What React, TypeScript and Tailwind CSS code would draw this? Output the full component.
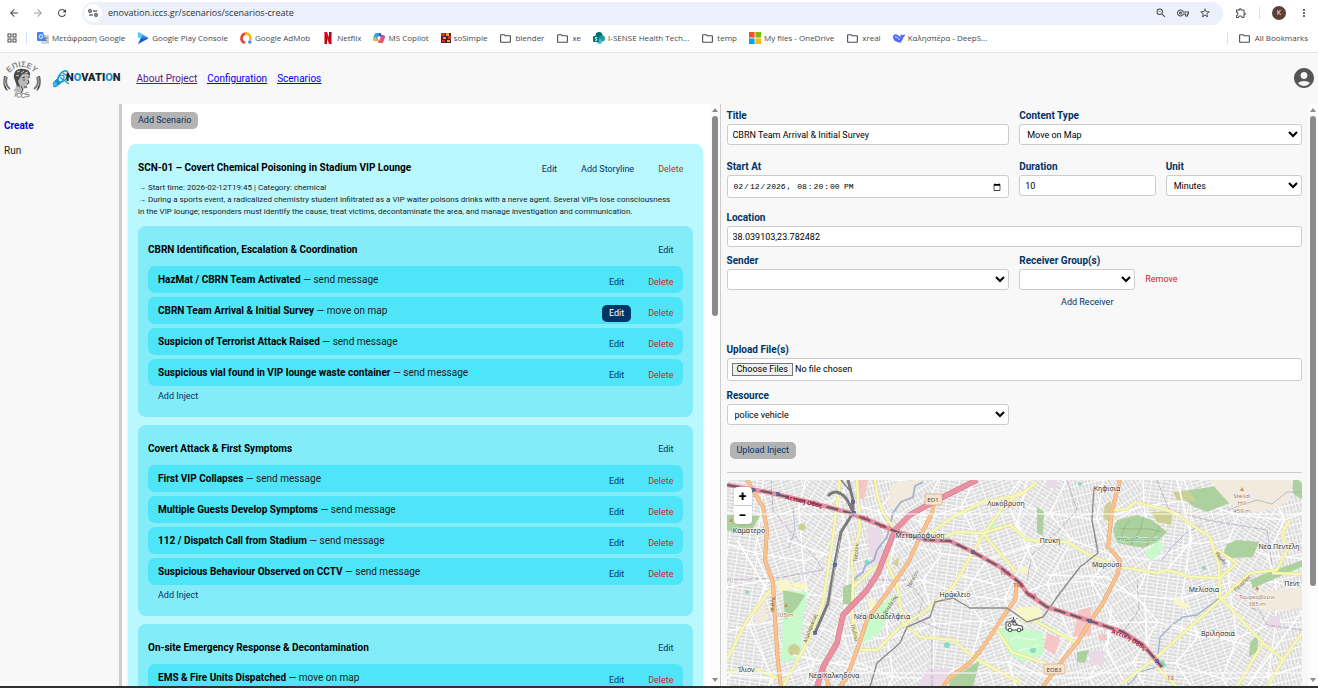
import React, { useState } from 'react';
import {
  MdArrowBack,
  MdArrowForward,
  MdRefresh,
  MdOutlineZoomOut,
  MdStarBorder,
  MdOutlineExtension,
  MdMoreVert,
  MdOutlineFolder,
  MdAccountCircle,
  MdOutlineVpnKey,
  MdOutlineGridView,
} from 'react-icons/md';

interface Inject {
  title: string;
  type: string;
}

interface Storyline {
  title: string;
  injects: Inject[];
}

const storylines: Storyline[] = [
  {
    title: 'CBRN Identification, Escalation & Coordination',
    injects: [
      { title: 'HazMat / CBRN Team Activated', type: 'send message' },
      { title: 'CBRN Team Arrival & Initial Survey', type: 'move on map' },
      { title: 'Suspicion of Terrorist Attack Raised', type: 'send message' },
      { title: 'Suspicious vial found in VIP lounge waste container', type: 'send message' },
    ],
  },
  {
    title: 'Covert Attack & First Symptoms',
    injects: [
      { title: 'First VIP Collapses', type: 'send message' },
      { title: 'Multiple Guests Develop Symptoms', type: 'send message' },
      { title: '112 / Dispatch Call from Stadium', type: 'send message' },
      { title: 'Suspicious Behaviour Observed on CCTV', type: 'send message' },
    ],
  },
  {
    title: 'On-site Emergency Response & Decontamination',
    injects: [{ title: 'EMS & Fire Units Dispatched', type: 'move on map' }],
  },
];

/* ---------- browser chrome ---------- */

const folder = <MdOutlineFolder className="size-[13px]" />;

const bookmarks: { label: string; icon: React.ReactNode }[] = [
  {
    label: 'Μετάφραση Google',
    icon: (
      <svg viewBox="0 0 12 12" className="size-3">
        <rect x="4" y="3" width="8" height="9" rx="1" fill="#cfd3d8" />
        <path d="M1 0h5l3 9H1a1 1 0 0 1-1-1V1a1 1 0 0 1 1-1z" fill="#4285f4" />
        <circle cx="4" cy="4.500" r="1.800" fill="none" stroke="#fff" />
        <path d="M7.500 6h3.500M9 5v1c0 1.500-1 2.500-1.500 3M8.500 7.500l2 2" stroke="#6b7280" strokeWidth=".7" fill="none" />
      </svg>
    ),
  },
  {
    label: 'Google Play Console',
    icon: (
      <svg viewBox="0 0 12 12" className="size-3">
        <path d="M1 0l10 5.500v1L1 12l3-6z" fill="#4285f4" />
        <path d="M1 6h10v.5L1 12l3-6z" fill="#1a5fd0" />
        <path d="M1 0l5 3-3 3H1z" fill="#5bc9f4" />
      </svg>
    ),
  },
  {
    label: 'Google AdMob',
    icon: (
      <svg viewBox="0 0 12 12" className="size-3">
        <path d="M4 10.500A4.800 4.800 0 0 1 6 1.500" stroke="#ea4335" strokeWidth="2.600" fill="none" strokeLinecap="round" />
        <path d="M6 1.500A4.500 4.500 0 0 1 10.300 7" stroke="#fbbc04" strokeWidth="2.600" fill="none" strokeLinecap="round" />
        <circle cx="9.800" cy="10" r="1.700" fill="#4285f4" />
      </svg>
    ),
  },
  {
    label: 'Netflix',
    icon: (
      <svg viewBox="0 0 12 12" className="size-3">
        <path d="M2.500 0h2.500v12H2.500zM7 0h2.500v12H7z" fill="#b1060f" />
        <path d="M2.500 0h2.500l4.500 12H7z" fill="#e50914" />
      </svg>
    ),
  },
  {
    label: 'MS Copilot',
    icon: (
      <svg viewBox="0 0 12 12" className="size-3">
        <path d="M3 1h4l-2.500 8H2a2 2 0 0 1-2-2.500L1.500 2.500A2 2 0 0 1 3 1z" fill="#2fa4e7" />
        <path d="M0 6l3-1 1.500 4H2a2 2 0 0 1-2-2.500z" fill="#f2b233" />
        <path d="M9 11H5l2.500-8H10a2 2 0 0 1 2 2.500l-1.500 4A2 2 0 0 1 9 11z" fill="#d64ea8" />
        <path d="M5 11l1-4 4 2.500A2 2 0 0 1 9 11z" fill="#f0663f" />
        <path d="M6 1h1.500L9 4H6z" fill="#2457c5" />
        <circle cx="6" cy="6" r="1.600" fill="#fff" />
      </svg>
    ),
  },
  {
    label: 'soSimple',
    icon: (
      <svg viewBox="0 0 10 10" className="size-2.5">
        <path d="M0 0h10v10H0z" fill="#3b2340" />
        <path d="M0 0h4v3H0zM7 3h3v3H7zM1 7h3v2H1z" fill="#e02b20" />
        <path d="M5 0h3v3H5zM2 4h3v2H2zM6 7h3v2H6z" fill="#f5a623" />
      </svg>
    ),
  },
  { label: 'blender', icon: folder },
  { label: 'xe', icon: folder },
  {
    label: 'I-SENSE Health Tech...',
    icon: (
      <svg viewBox="0 0 12 12" className="size-3">
        <circle cx="6" cy="3.500" r="3.500" fill="#036c70" />
        <circle cx="9" cy="6.500" r="3" fill="#1a9ba1" />
        <circle cx="6.500" cy="9.500" r="2.500" fill="#37c6d0" />
        <rect x="0" y="4" width="6" height="6" rx=".6" fill="#03787c" />
        <path d="M4.200 5.500H2.500v1.400h1.200v1.500H2" stroke="#fff" strokeWidth=".8" fill="none" />
      </svg>
    ),
  },
  { label: 'temp', icon: folder },
  {
    label: 'My files - OneDrive',
    icon: (
      <svg viewBox="0 0 12 12" className="size-3">
        <path d="M0 0h5.600v5.600H0z" fill="#f25022" />
        <path d="M6.400 0H12v5.600H6.400z" fill="#7fba00" />
        <path d="M0 6.400h5.600V12H0z" fill="#00a4ef" />
        <path d="M6.400 6.400H12V12H6.400z" fill="#ffb900" />
      </svg>
    ),
  },
  { label: 'xreal', icon: folder },
  {
    label: 'Καλησπέρα - DeepS...',
    icon: (
      <svg viewBox="0 0 12 12" className="size-3">
        <path
          d="M0 5c0-2 1.500-3 3.500-2.600C5.500 2.800 6 4.500 8 4.800 7.300 3.500 7.600 2.500 8.300 2c.2.900.7 1.200 1.500 1.100C10.500 3 11.200 2.500 12 2.400c-.1 1.600-.9 2.700-2 3 0 2-1 3.500-2.200 4.200l1.100.6c-1.600.6-3.100.4-4.500-.2C1.800 9.400 0 7.500 0 5z"
          fill="#4d6bfe"
        />
        <path d="M2 5c1.500-.3 3.800 1 4.300 3" stroke="#fff" strokeWidth=".9" fill="none" />
      </svg>
    ),
  },
];

const BrowserBar: React.FC = () => (
  <div className="shrink-0 border-b border-[#e4e6ea] bg-white font-['Open_Sans','Noto_Sans',sans-serif] text-[#45484c]">
    <div className="flex h-[26px] items-center pr-2">
      <div className="flex w-[82px] shrink-0 items-center gap-3 pl-2">
        <button aria-label="Back"><MdArrowBack className="size-3" /></button>
        <button aria-label="Forward" className="text-gray-400"><MdArrowForward className="size-3" /></button>
        <button aria-label="Reload"><MdRefresh className="size-3" /></button>
      </div>
      <div className="flex h-[23px] flex-1 items-center gap-1.5 rounded-full bg-[#ebf0fa] pr-3 pl-0.5">
        <span className="flex size-[18px] items-center justify-center rounded-full bg-white">
          <svg viewBox="0 0 10 8" className="h-2 w-2.5" fill="none" stroke="#45484c" strokeWidth="1.200">
            <circle cx="2" cy="2" r="1.300" />
            <path d="M5 2h4" />
            <circle cx="8" cy="6" r="1.300" />
            <path d="M1 6h4" />
          </svg>
        </span>
        <input
          aria-label="Address"
          className="min-w-0 flex-1 bg-transparent text-[9px] text-[#303338] outline-none"
          defaultValue="enovation.iccs.gr/scenarios/scenarios-create"
        />
        <div className="flex items-center gap-2.5">
          <button aria-label="Zoom"><MdOutlineZoomOut className="size-3" /></button>
          <button aria-label="Passwords"><MdOutlineVpnKey className="size-3" /></button>
          <button aria-label="Bookmark this tab"><MdStarBorder className="size-3" /></button>
        </div>
      </div>
      <div className="flex shrink-0 items-center gap-3 pl-3">
        <button aria-label="Extensions"><MdOutlineExtension className="size-3" /></button>
        <span className="h-3 w-px bg-[#cfe0fb]" />
        <span className="flex size-3.5 items-center justify-center rounded-full bg-[#5d4037] text-[7px] text-white">K</span>
        <button aria-label="Menu"><MdMoreVert className="size-3" /></button>
      </div>
    </div>
    <div className="flex h-[26px] items-center pr-2.5 pl-1.5 pb-0.5 text-[8px] whitespace-nowrap">
      <button aria-label="Apps"><MdOutlineGridView className="size-3" /></button>
      <span className="mr-2.5 ml-2 h-3 w-px bg-[#cfe0fb]" />
      <div className="flex items-center gap-3">
        {bookmarks.map((b) => (
          <a key={b.label} href="#" className="flex items-center gap-[3px]">
            {b.icon}
            {b.label}
          </a>
        ))}
      </div>
      <span className="ml-auto h-3 w-px bg-[#cfe0fb]" />
      <button className="ml-2.5 flex items-center gap-1">
        {folder}
        All Bookmarks
      </button>
    </div>
  </div>
);

/* ---------- app header ---------- */

const IccsLogo: React.FC = () => (
  <svg viewBox="0 0 40 40" className="size-10" role="img" aria-label="ICCS">
    <defs>
      <path id="arcTop" d="M5 19.500A15.500 15.500 0 0 1 35 19.500" />
      <path id="arcBottom" d="M4 31A20 20 0 0 0 36 31" />
      <linearGradient id="ring" x1="0" x2="1">
        <stop offset="0" stopColor="#aaa" />
        <stop offset=".5" stopColor="#333" />
        <stop offset="1" stopColor="#999" />
      </linearGradient>
    </defs>
    <text fontSize="8" fontWeight="700" fill="#858585" fontFamily="Liberation Sans, sans-serif" textAnchor="middle">
      <textPath href="#arcTop" startOffset="50%">ΕΠΙΣΕΥ</textPath>
    </text>
    <text fontSize="7" fontWeight="700" fill="#858585" fontFamily="Liberation Sans, sans-serif" textAnchor="middle">
      <textPath href="#arcBottom" startOffset="50%">ICCS</textPath>
    </text>
    <path d="M2 17c-2 6-1 11 3 15l1-1C2 26 2 21 4 17z" fill="url(#ring)" />
    <path d="M38 17c2 6 1 11-3 15l-1-1c4-5 4-10 2-14z" fill="url(#ring)" />
    <path d="M5 18c-2 4-1 9 3 12" stroke="#777" strokeWidth="2" fill="none" />
    <path d="M35 18c2 4 1 9-3 12" stroke="#777" strokeWidth="2" fill="none" />
    <g transform="translate(0 1)">
      <path d="M13 17c-1-5 3-9 8-8 5 0 8 3 7 7l-1 3-1 2 1 3-2 1v3l-4 1-1 4-9-2c3-3 4-5 3-8z" fill="#b9b9b9" />
      <path d="M12 18c-1-6 3-10 9-9 5 0 8 3 7 7-2-3-4-3-7-2-2 1-3 4-5 7l2 6-3-1z" fill="#4a4a4a" />
      <path d="M15 12l3-1m1 2l3-2m1 2l3-1M14 16l3-1" stroke="#c4c4c4" strokeWidth="1" />
      <path d="M20 18l3-1m3 0l2 0M21 20h2m3 0l1 3-2 1m-3 3h3m-6-1l2 4-2 3" stroke="#444" strokeWidth="1" fill="none" />
    </g>
  </svg>
);

const EnovationLogo: React.FC = () => (
  <div className="flex items-center" role="img" aria-label="eNOVATION">
    <svg viewBox="0 0 18 20" className="-mr-1 h-5 w-[18px]" fill="none" stroke="#1597d4">
      <path d="M1 14l4-4 4 4-4 3-3 1z" fill="#1597d4" />
      <ellipse cx="11" cy="7.500" rx="3.800" ry="6.500" transform="rotate(38 11 7.500)" strokeWidth="1.500" />
      <ellipse cx="8.500" cy="10" rx="2.600" ry="4.500" transform="rotate(38 8.500 10)" strokeWidth="1.200" />
      <path d="M8 8l3 3M11 4l4 3M13 12l4 3" strokeWidth="1.200" />
      <circle cx="3" cy="15" r="2" fill="#4db6e4" stroke="none" />
    </svg>
    <span className="text-[11px] font-black text-[#1c2430]">
      N<span className="text-[#1597d4]">O</span>VATI<span className="text-[#1597d4]">O</span>N
    </span>
  </div>
);

const Header: React.FC = () => (
  <header className="flex h-[51px] shrink-0 items-center bg-[#f8f8f8] px-0.5">
    <IccsLogo />
    <div className="ml-2.5">
      <EnovationLogo />
    </div>
    <nav className="ml-4 flex gap-2.5 text-[10px] text-[#0000ee] underline">
      <a href="#" className="text-[#551a8b]">About Project</a>
      <a href="#">Configuration</a>
      <a href="#">Scenarios</a>
    </nav>
    <button aria-label="Account" className="ml-auto pb-0.5 text-[#555]">
      <MdAccountCircle className="size-6" />
    </button>
  </header>
);

/* ---------- shared bits ---------- */

const Scrollbar: React.FC<{ thumb: string }> = ({ thumb }) => (
  <div className="flex w-2.5 shrink-0 flex-col items-center justify-between bg-[#fcfcfc] py-1" aria-hidden="true">
    <svg viewBox="0 0 6 4" className="h-1 w-1.5 shrink-0" fill="#8b8b8b"><path d="M3 0l3 4H0z" /></svg>
    <div className="mt-1 min-h-0 w-full flex-1 px-0.5">
      <div className={`w-full rounded-full bg-[#8b8b8b] ${thumb}`} />
    </div>
    <svg viewBox="0 0 6 4" className="h-1 w-1.5 shrink-0" fill="#8b8b8b"><path d="M3 4l3-4H0z" /></svg>
  </div>
);

const TextButton: React.FC<{ label: string; tone?: 'navy' | 'red' | 'active' | 'gray'; onClick?: () => void }> = ({
  label,
  tone = 'navy',
  onClick,
}) => {
  const tones = {
    navy: 'text-[#003366]',
    red: 'text-[#cc1f1f]',
    active: 'bg-[#003366] text-white',
    gray: 'bg-[#b3b3b3] text-[#003366]',
  };
  return (
    <button onClick={onClick} className={`h-[17px] rounded-[5px] px-[7px] text-[9px] leading-none ${tones[tone]}`}>
      {label}
    </button>
  );
};

/* ---------- scenario list ---------- */

const ScenarioList: React.FC = () => {
  const [selected, setSelected] = useState('CBRN Team Arrival & Initial Survey');

  return (
    <div className="min-w-0 flex-1 overflow-hidden bg-white pt-2 pr-[7px] pl-1.5">
      <div className="flex pl-[3px]">
        <TextButton label="Add Scenario" tone="gray" />
      </div>
      <section className="mt-[15px] rounded-lg bg-[#baf8ff] p-2.5 shadow-md">
        <div className="flex h-[26px] items-center justify-between">
          <h2 className="text-[10px] font-bold text-black">SCN-01 – Covert Chemical Poisoning in Stadium VIP Lounge</h2>
          <div className="flex gap-2.5 self-end pr-0.5 pb-0.5">
            <TextButton label="Edit" />
            <TextButton label="Add Storyline" />
            <TextButton label="Delete" tone="red" />
          </div>
        </div>
        <div className="mt-0.5 mb-2 pr-[18px] text-[8px] leading-3 text-[#1a1a1a]">
          <p>→ Start time: 2026-02-12T19:45 | Category: chemical</p>
          <p>
            → During a sports event, a radicalized chemistry student infiltrated as a VIP waiter poisons drinks with a nerve
            agent. Several VIPs lose consciousness in the VIP lounge; responders must identify the cause, treat victims,
            decontaminate the area, and manage investigation and communication.
          </p>
        </div>
        <div className="flex flex-col gap-2">
          {storylines.map((story) => (
            <article key={story.title} className="rounded-lg bg-[#84ecf8] px-2.5 pt-2.5 pb-3">
              <div className="mb-1 flex h-[26px] items-center justify-between">
                <h3 className="text-[10px] font-bold text-black">{story.title}</h3>
                <div className="self-end pr-0.5 pb-0.5">
                  <TextButton label="Edit" />
                </div>
              </div>
              <ul className="flex flex-col gap-1">
                {story.injects.map((inject) => (
                  <li
                    key={inject.title}
                    className="flex h-[27px] items-center justify-between rounded-[7px] bg-[#4fe5f8] pl-2.5 text-[10px] text-[#1a1a1a]"
                  >
                    <span>
                      <b className="font-bold text-black">{inject.title}</b> — {inject.type}
                    </span>
                    <div className="flex gap-2.5 self-end pr-0.5 pb-0.5">
                      <TextButton
                        label="Edit"
                        tone={inject.title === selected ? 'active' : 'navy'}
                        onClick={() => setSelected(inject.title)}
                      />
                      <TextButton label="Delete" tone="red" />
                    </div>
                  </li>
                ))}
              </ul>
              <div className="mt-0.5 flex pl-[3px]">
                <TextButton label="Add Inject" />
              </div>
            </article>
          ))}
        </div>
      </section>
    </div>
  );
};

/* ---------- map ---------- */

// Street blocks: a jittered lattice whose cells each take one of the rotated street patterns
const COLS = 14;
const ROWS = 6;
const vertex = (i: number, j: number) => {
  const dx = Math.sin(i * 12.9 + j * 78.2) * 13;
  const dy = Math.cos(i * 39.3 + j * 11.1) * 11;
  return `${Math.round((i * 600) / COLS - 10 + dx)},${Math.round((j * 240) / ROWS - 10 + dy)}`;
};
const blocks = Array.from({ length: COLS * ROWS }, (_, n) => {
  const i = n % COLS;
  const j = Math.floor(n / COLS);
  return {
    points: [vertex(i, j), vertex(i + 1, j), vertex(i + 1, j + 1), vertex(i, j + 1)].join(' '),
    fill: `url(#streets${(i * 3 + j * 5) % 5})`,
  };
});

const angles = [8, 32, 58, -18, 76];

const motorway = 'M0 5L40 12 86 23 123 33 146 42 170 52 200 60 223 61 246 72 273 87 293 103 300 113 320 127 363 141 396 152 416 165 435 187';

const yellowRoads = [
  'M46 107L20 140 0 180',
  'M113 0L106 57 96 123 83 157 56 207',
  'M130 0L133 50 125 77 126 107 125 133 130 160',
  'M148 0L150 15 156 33 166 47',
  'M126 107L145 90 163 77',
  'M160 83L170 105 176 143 193 157 226 160 246 177 293 203',
  'M173 147L200 130 226 107 253 60 275 28 293 12',
  'M193 60L226 37 256 22 293 15 310 2',
  'M256 53L270 70 290 93',
  'M203 62L230 52 256 53 283 45 300 60 340 62 366 77 393 87 430 93 440 90 463 97 493 98 510 83 490 70',
  'M386 30L400 29 408 22 446 32 483 57 492 85 493 117 536 163 556 180',
  'M493 120L430 177 396 203',
  'M493 120L523 93 550 90 560 70 555 53 563 40',
  'M536 163L510 207',
  'M575 153L556 180 540 207',
  'M430 187L450 207',
  'M306 140L350 163',
  'M545 93L575 94',
  'M0 192L30 190 56 200',
  'M173 147L150 170 133 170',
  'M270 150L285 172 316 183',
];

const orangeRoads = [
  'M20 0L36 27 40 50 38 80 46 103 48 140 51 183 54 207',
  'M208 20L205 33 193 57 181 83 160 113 140 140 131 167 120 197 113 207',
  'M393 0L385 30 381 67 393 80 391 93 376 123 363 142 350 163 333 183 316 207',
  'M290 103L288 120 276 137 256 167 243 183 223 197 216 207',
  'M96 187L102 207',
];

const places: { name: string; x: number; y: number }[] = [
  { name: 'Καματερό', x: 22, y: 53 },
  { name: 'Λυκόβρυση', x: 279, y: 26 },
  { name: 'Μεταμόρφωση', x: 193, y: 58 },
  { name: 'Ηράκλειο', x: 228, y: 117 },
  { name: 'Νέα Φιλαδέλφεια', x: 155, y: 139 },
  { name: 'Νέα Χαλκηδόνα', x: 107, y: 198 },
  { name: 'Ίλιον', x: 19, y: 192 },
  { name: 'Κηφισιά', x: 380, y: 11 },
  { name: 'Πεύκη', x: 323, y: 63 },
  { name: 'Μαρούσι', x: 380, y: 87 },
  { name: 'Νέα Πεντέλη', x: 552, y: 69 },
  { name: 'Μελίσσια', x: 477, y: 112 },
  { name: 'Βριλήσσια', x: 491, y: 156 },
  { name: 'Πεντ', x: 565, y: 106 },
];

const MapView: React.FC = () => (
  <div className="relative min-h-0 flex-1 overflow-hidden rounded-t-[5px] bg-[#dedddd]">
    <svg viewBox="0 0 576 206" preserveAspectRatio="xMinYMin slice" className="h-full w-full" fontFamily="Noto Sans, sans-serif">
      <defs>
        {angles.map((a, i) => (
          <pattern key={a} id={`streets${i}`} width="10" height="7" patternUnits="userSpaceOnUse" patternTransform={`rotate(${a})`}>
            <rect width="10" height="7" fill="#dcdbdb" />
            <path d="M0 .5H10M.5 0V7M6 0V3.500M0 4H10" stroke="#fff" strokeWidth=".9" />
          </pattern>
        ))}
      </defs>
      {blocks.map((b, i) => (
        <polygon key={i} points={b.points} fill={b.fill} stroke="#fff" strokeWidth="1.200" />
      ))}

      {/* land use */}
      <g fill="#c8facc">
        <path d="M56 110L80 112 76 140 73 177 55 183z" />
        <path d="M156 123L168 115 153 153 136 163 140 142z" />
        <path d="M270 150L285 143 316 153 316 175 296 182 283 175z" />
        <path d="M418 72L432 60 437 68 424 82z" />
        <path d="M262 42L269 40 269 48 262 49z" />
      </g>
      <g fill="#add19e">
        <path d="M390 40L410 35 425 40 440 52 430 62 416 68 390 63 386 50z" />
        <path d="M310 27L317 32 316 55 310 53z" />
        <path d="M496 75L500 64 510 60 532 62 526 77 505 78z" />
        <path d="M450 12L490 6 510 20 480 32 465 26z" />
        <path d="M0 34L33 36 26 48 8 53 0 50z" />
        <path d="M223 200L253 180 246 207 222 207z" />
        <path d="M56 110L78 115 70 128 58 140z" />
        <path d="M566 0H576V20L566 14z" />
        <path d="M523 100L540 93 576 80 576 86 545 100 526 108z" />
        <path d="M350 172L362 170 358 183 350 182z" />
        <path d="M116 107L125 103 124 125 116 124z" />
        <path d="M523 163L532 152 530 172 522 177z" />
      </g>
      <g fill="#f2ebdd">
        <path d="M483 0H566L563 20 550 27 525 33 505 26 490 10z" />
        <path d="M166 3L195 0 185 17 170 30 160 25z" />
        <path d="M530 112L576 108V128L536 132z" />
        <path d="M26 130L38 120 40 140 30 145z" />
      </g>
      <g fill="#f8f7c9">
        <path d="M49 101L62 100 66 110 51 111z" />
        <path d="M64 102L80 104 82 110 68 110z" />
        <path d="M288 128L312 126 316 138 295 143z" />
        <path d="M140 122L147 119 149 127 143 130z" />
        <path d="M290 90L300 85 302 96z" />
        <path d="M448 118L462 124 459 130 446 123z" />
      </g>
      <g fill="#cdcf94">
        <path d="M446 12L462 11 470 22 450 20z" />
        <path d="M424 32L446 32 444 45 430 42z" />
        <path d="M378 25L384 20 382 42 376 38z" />
        <circle cx="75" cy="47" r="3.500" />
        <path d="M165 83L172 77 171 87z" />
        <circle cx="67" cy="170" r="6" />
      </g>
      <g fill="#f5c6c4">
        <path d="M320 153L333 158 328 175 317 168z" />
        <path d="M352 130L364 127 364 155 346 157z" />
        <path d="M130 0L141 0 137 20 131 18z" />
        <path d="M371 155L378 153 380 160 372 161z" />
      </g>
      <g fill="#ead9e6">
        <path d="M141 45L155 50 155 85 146 82 140 60z" />
        <path d="M320 0L330 0 330 8 320 8z" />
        <path d="M363 172L378 170 376 186 362 184z" />
        <path d="M200 190L225 188 214 207 190 207z" />
        <path d="M540 138L553 135 553 147 542 148z" />
      </g>
      <g fill="#88dcbe">
        <circle cx="220" cy="165" r="3" />
        <circle cx="140" cy="82" r="2.500" />
        <circle cx="306" cy="170" r="3" />
        <path d="M428 184L436 180 440 186 434 188z" />
        <circle cx="20" cy="112" r="2" />
        <circle cx="353" cy="4" r="2" />
        <circle cx="477" cy="88" r="2" />
      </g>
      <path d="M392 60c6-8 3-14 12-20M404 66c3-10 10-12 12-28M420 66c0-9 10-8 12-20M392 48c12 3 28-2 42 4" stroke="#8ca775" strokeWidth=".6" fill="none" />
      <path d="M284 160c8-8 18 4 26-2M290 176c4-12 14-4 22-12" stroke="#fff" strokeWidth=".8" fill="none" />

      {/* boundaries and water */}
      <g fill="none" stroke="#bfa9c6" strokeWidth="1" strokeDasharray="4 1 1 1">
        <path d="M44 0L46 30 62 50 90 80 96 90" />
        <path d="M126 100L180 100 196 120 190 140 215 150" />
        <path d="M340 0L350 30 332 50 305 75 300 100" />
        <path d="M430 0L442 30 480 40 540 50 545 85" />
        <path d="M576 150L540 145 532 130 524 128" />
        <path d="M0 100L50 98 96 90" />
        <path d="M205 160L205 207M396 152L412 130 410 100" />
      </g>
      <g fill="none" stroke="#9fb2cf" strokeWidth="1.800" strokeLinejoin="round">
        <path d="M196 2L188 6 186 17 174 22 166 33 163 46 160 57 150 70 147 80 138 86 136 92 126 100 124 107" />
        <path d="M430 183L433 157 445 145 456 137 470 135 490 120 512 105" strokeWidth="1.400" />
        <path d="M433 82L446 66 460 52 475 45" strokeWidth=".8" />
        <path d="M500 30L530 20 545 24 560 12 576 12" strokeWidth=".8" />
        <path d="M430 187L412 192 405 202 396 207" strokeWidth="1.200" />
        <path d="M66 27L68 50 62 68" strokeWidth=".8" />
      </g>

      {/* secondary roads */}
      <g fill="none" stroke="#fff" strokeWidth="1.600">
        <path d="M320 95L380 97 418 125 420 165M233 95L270 105M66 175L140 190M300 0L290 45 310 90" />
        <path d="M445 145L520 165M450 0L465 60 440 90M10 60L40 110M60 60L100 75M520 207L576 130M400 207L380 170 384 128" />
      </g>
      <g fill="none" stroke="#d5d48e" strokeWidth="3.200" strokeLinejoin="round">
        {yellowRoads.map((d) => <path key={d} d={d} />)}
      </g>
      <g fill="none" stroke="#f6f8b4" strokeWidth="2.600" strokeLinejoin="round">
        {yellowRoads.map((d) => <path key={d} d={d} />)}
      </g>
      <g fill="none" stroke="#d9a066" strokeWidth="4" strokeLinejoin="round">
        {orangeRoads.map((d) => <path key={d} d={d} />)}
      </g>
      <g fill="none" stroke="#fbc28e" strokeWidth="3.200" strokeLinejoin="round">
        {orangeRoads.map((d) => <path key={d} d={d} />)}
      </g>

      {/* railways */}
      <g fill="none" stroke="#7b7b7b">
        <path d="M101 16C107 9 119 10 126 33M121 0L126 20V33M126 33L114 52 108 83 101 123 88 153" strokeWidth="3" />
        <path d="M110 13C119 15 120 22 126 33M114 0L124 12" strokeWidth="1.400" />
        <path d="M113 60L106 100 102 130" stroke="#c7c7c7" strokeWidth=".8" />
        <path
          d="M143 207L150 183 173 163 180 147 203 137 208 122 226 118 243 128 280 128 293 137 300 142 316 137 333 113 353 87 371 73 365 40 367 7"
          stroke="#8d8d8d"
          strokeWidth="1.400"
          strokeLinejoin="round"
        />
      </g>

      {/* motorways */}
      <path d="M250 0L206 22 183 35 168 50 160 70 151 93 140 110 116 135 110 163 96 187 90 207" fill="none" stroke="#dc6d86" strokeWidth="5.600" strokeLinejoin="round" />
      <path d="M250 0L206 22 183 35 168 50 160 70 151 93 140 110 116 135 110 163 96 187 90 207" fill="none" stroke="#e892a2" strokeWidth="4.600" strokeLinejoin="round" />
      <path d={motorway} fill="none" stroke="#e58da0" strokeWidth="4.600" strokeLinejoin="round" />
      <path d={motorway} fill="none" stroke="#6b5960" strokeWidth="2" strokeDasharray="12 5" />
      <path id="attiki" d="M58 19L86 26 110 32" fill="none" />
      <path id="attiki2" d="M384 153L400 159 420 172" fill="none" />
      <g fontSize="6" fontWeight="700" fill="#a02846">
        <text><textPath href="#attiki">Αττική Οδός</textPath></text>
        <text><textPath href="#attiki2">Αττική Οδός</textPath></text>
      </g>
      <g fontSize="6" fill="#c43a55">
        <text x="135" y="40">8Α</text>
        <text x="152" y="48">9Α</text>
        <text x="273" y="95">10Α</text>
        <text x="286" y="107">10Β</text>
        <text x="299" y="117">10Α</text>
        <text x="440" y="200">13</text>
      </g>
      <g fill="#5f6eb0" stroke="#3f4b86" strokeWidth=".5">
        {[[26, 10], [51, 14], [127, 33], [126, 22], [108, 85], [88, 153], [246, 72], [363, 141], [430, 181]].map(([x, y]) => (
          <rect key={`${x}-${y}`} x={x - 1.5} y={y - 1.5} width="3" height="3" />
        ))}
      </g>

      {/* tile seams */}
      <path d="M0 34H576M0 193H576" stroke="#fff" strokeWidth="1" />

      {/* labels */}
      <g fontSize="5" fill="#6b5518">
        <text transform="translate(158 135) rotate(-55)">Δεκελείας</text>
        <text transform="translate(183 108) rotate(-62)">Τατοΐου</text>
        <text transform="translate(79 163) rotate(-68)">Δημοκρατίας</text>
        <text transform="translate(130 82) rotate(-85)">Τατοΐου</text>
        <text transform="translate(509 112) rotate(-44)">Πεντέλης</text>
        <text transform="translate(488 74) rotate(50)">Πηγής</text>
        <text transform="translate(124 145) rotate(75)">Πίνδου</text>
        <text transform="translate(47 132) rotate(-88)">Φυλής</text>
      </g>
      <g fontSize="6" textAnchor="middle" fill="#a8703a" stroke="#fff" strokeWidth="1" paintOrder="stroke">
        <text x="58" y="137">105 m</text>
        <text x="515" y="18">Stelidi</text>
        <text x="515" y="25">Hill</text>
        <text x="515" y="33">459 m</text>
        <text x="530" y="119">Τουρκοβούνι</text>
        <text x="530" y="126">385 m</text>
      </g>
      <path d="M59 123l2 4h-4zM515 7l2 4h-4zM530 106l2 4h-4zM4 38l2 4h-4z" fill="#d08f55" />
      <text x="410" y="61" fontSize="6" fontStyle="italic" textAnchor="middle" fill="#3b9a5c" stroke="#e6f5e0" strokeWidth=".8" paintOrder="stroke">
        Κτήμα Συγγρού
      </text>
      <g fontSize="7" textAnchor="middle" fill="#333" stroke="#fff" strokeWidth="1.200" strokeOpacity=".8" paintOrder="stroke">
        {places.map((p) => <text key={p.name} x={p.x} y={p.y}>{p.name}</text>)}
      </g>
      <g fontSize="6" textAnchor="middle">
        <rect x="198" y="14" width="17" height="11" rx="1" fill="#f7e3cb" stroke="#c9a47c" strokeWidth=".6" />
        <text x="206" y="22" fill="#444">ΕΟ1</text>
        <rect x="317" y="184" width="21" height="10" rx="1" fill="#f7e3cb" stroke="#c9a47c" strokeWidth=".6" />
        <text x="327" y="192" fill="#444">ΕΟ83</text>
      </g>

      {/* police vehicle marker */}
      <g transform="translate(278 137)" fill="#fff" stroke="#333" strokeWidth=".9" strokeLinejoin="round">
        <path d="M1 5h9l2 3 5 1 1 4H2l-1-1z" />
        <path d="M10 5l2 3H8V5z" />
        <circle cx="5" cy="13" r="1.800" />
        <circle cx="14" cy="13" r="1.800" />
        <circle cx="4.500" cy="8" r="1.500" />
        <path d="M7 5l0-2h3v2M8.500 2V0M5.500 2L4.500 1M11.500 2l1-1" fill="none" />
      </g>
    </svg>
    <div className="absolute top-[7px] left-[7px] flex flex-col rounded-sm bg-white text-sm leading-none font-bold text-black shadow">
      <button aria-label="Zoom in" className="h-[19px] w-[18px] border-b border-[#ccc]">+</button>
      <button aria-label="Zoom out" className="h-[18px] w-[18px]">−</button>
    </div>
  </div>
);

/* ---------- inject form ---------- */

const fieldClass = 'block w-full rounded-[3px] border border-[#ccc] bg-white text-black';

const Field: React.FC<{ id: string; label: string; children: React.ReactNode }> = ({ id, label, children }) => (
  <div className="min-w-0">
    <label htmlFor={id} className="block h-4 text-[10px] leading-4 font-bold text-[#003366]">{label}</label>
    {children}
  </div>
);

const InjectForm: React.FC = () => {
  const [title, setTitle] = useState('CBRN Team Arrival & Initial Survey');
  const [startAt, setStartAt] = useState('2026-02-12T20:20:00');
  const [location, setLocation] = useState('38.039103,23.782482');
  const [duration, setDuration] = useState('10');

  return (
    <div className="flex min-w-0 flex-1 flex-col bg-[#f8f8f8] pt-1 pr-1.5 pl-1.5">
      <form className="border-b border-[#ccc] pb-[13px]" onSubmit={(e) => e.preventDefault()}>
        <div className="grid grid-cols-2 gap-x-2.5">
          <Field id="title" label="Title">
            <input id="title" value={title} onChange={(e) => setTitle(e.target.value)} className={`h-[21px] px-[5px] text-[9px] ${fieldClass}`} />
          </Field>
          <Field id="contentType" label="Content Type">
            <select id="contentType" className={`h-[21px] px-[3px] text-[9px] ${fieldClass}`}>
              <option>Move on Map</option>
              <option>Send Message</option>
            </select>
          </Field>
        </div>

        <div className="mt-3.5 grid grid-cols-2 gap-x-2.5">
          <Field id="startAt" label="Start At">
            <input
              id="startAt"
              type="datetime-local"
              step="1"
              value={startAt}
              onChange={(e) => setStartAt(e.target.value)}
              className={`h-[23px] px-[5px] font-['Liberation_Mono',monospace] text-[8px] ${fieldClass}`}
            />
          </Field>
          <div className="grid grid-cols-2 gap-x-2.5">
            <Field id="duration" label="Duration">
              <input id="duration" value={duration} onChange={(e) => setDuration(e.target.value)} className={`h-[21px] px-[5px] text-[9px] ${fieldClass}`} />
            </Field>
            <Field id="unit" label="Unit">
              <select id="unit" className={`h-[21px] px-[3px] text-[9px] ${fieldClass}`}>
                <option>Minutes</option>
                <option>Hours</option>
              </select>
            </Field>
          </div>
        </div>

        <div className="mt-3">
          <Field id="location" label="Location">
            <input id="location" value={location} onChange={(e) => setLocation(e.target.value)} className={`h-[21px] px-[5px] text-[9px] ${fieldClass}`} />
          </Field>
        </div>

        <div className="mt-1.5 grid grid-cols-2 gap-x-2.5">
          <Field id="sender" label="Sender">
            <select id="sender" className={`h-[21px] px-[3px] text-[9px] ${fieldClass}`}>
              <option></option>
            </select>
          </Field>
          <Field id="receiver" label="Receiver Group(s)">
            <div className="flex items-center gap-[3px]">
              <div className="w-[116px]">
                <select id="receiver" className={`h-[21px] px-[3px] text-[9px] ${fieldClass}`}>
                  <option></option>
                </select>
              </div>
              <TextButton label="Remove" tone="red" />
            </div>
            <div className="mt-1 flex w-[136px] justify-center">
              <TextButton label="Add Receiver" />
            </div>
          </Field>
        </div>

        <div className="mt-[31px]">
          <Field id="files" label="Upload File(s)">
            <input
              id="files"
              type="file"
              multiple
              className={`h-[23px] px-1 py-1 text-[9px] leading-3 file:mr-0.5 file:h-[13px] file:border file:border-solid file:border-[#767676] file:bg-[#efefef] file:px-1 file:leading-none ${fieldClass}`}
            />
          </Field>
        </div>

        <div className="mt-[7px] grid grid-cols-2 gap-x-2.5">
          <Field id="resource" label="Resource">
            <select id="resource" className={`h-[21px] px-[3px] text-[9px] ${fieldClass}`}>
              <option>police vehicle</option>
              <option>ambulance</option>
            </select>
          </Field>
        </div>

        <div className="mt-[17px] flex pl-[3px]">
          <TextButton label="Upload Inject" tone="gray" />
        </div>
      </form>
      <div className="mt-[7px] flex min-h-0 flex-1">
        <MapView />
      </div>
    </div>
  );
};

const App: React.FC = () => (
  <div className="flex h-screen flex-col overflow-hidden bg-[#f8f8f8] font-[Roboto,sans-serif]">
    <BrowserBar />
    <Header />
    <div className="flex min-h-0 flex-1 border-b-2 border-[#2d3230]">
      <nav className="flex w-[122px] shrink-0 flex-col gap-2.5 border-r-[3px] border-[#ccc] pt-3.5 pl-1 text-[10px] leading-[15px]">
        <a href="#" className="font-bold text-[#0000ee]">Create</a>
        <a href="#" className="text-[#1a1a1a]">Run</a>
      </nav>
      <main className="flex min-w-0 flex-1">
        <div className="flex min-w-0 flex-1 border-r border-[#ccc]">
          <ScenarioList />
          <Scrollbar thumb="h-[200px]" />
        </div>
        <div className="flex min-w-0 flex-1">
          <InjectForm />
          <Scrollbar thumb="h-[470px]" />
        </div>
      </main>
    </div>
  </div>
);

export default App;
